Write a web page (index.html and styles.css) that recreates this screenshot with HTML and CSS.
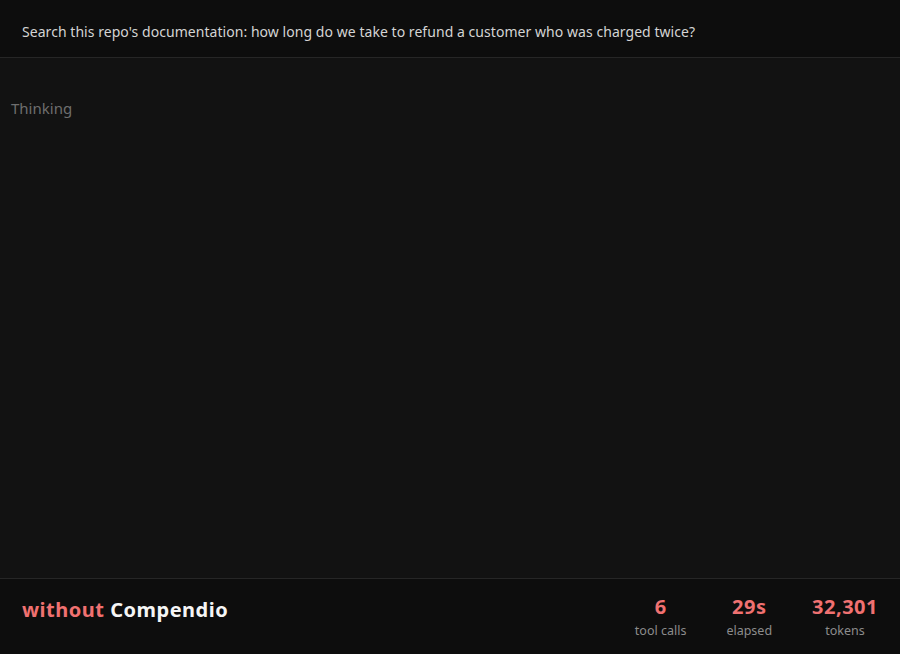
FILE: index.html
```html
<!DOCTYPE html>
<html lang="en">
<head>
  <meta charset="UTF-8">
  <title>without Compendio</title>
  <link rel="stylesheet" href="styles.css">
</head>
<body>

  <div class="prompt">Search this repo's documentation: how long do we take to refund a customer who was charged twice?</div>

  <div class="log">
    <div class="thinking">Thinking</div>
  </div>

  <div class="footer">
    <div class="title"><span class="without">without</span> Compendio</div>
    <div class="stats">
      <div class="stat">
        <div class="num">6</div>
        <div class="label">tool calls</div>
      </div>
      <div class="stat">
        <div class="num">29s</div>
        <div class="label">elapsed</div>
      </div>
      <div class="stat">
        <div class="num">32,301</div>
        <div class="label">tokens</div>
      </div>
    </div>
  </div>

</body>
</html>
```

FILE: styles.css
```css
html, body {
  height: 100%;
}
body {
  margin: 0;
  display: flex;
  flex-direction: column;
  background-color: #121212;
  font-family: 'Noto Sans', 'Open Sans', sans-serif;
}
.prompt {
  height: 58px;
  box-sizing: border-box;
  padding: 5px 22px 0;
  display: flex;
  align-items: center;
  background-color: #0d0d0d;
  border-bottom: 1px solid #262626;
  color: #d4d4d4;
  font-size: 14px;
  letter-spacing: 0.05px;
}
.log {
  flex: 1;
  padding: 40px 11px;
}
.thinking {
  color: #6e6e6e;
  font-size: 15px;
}
.footer {
  height: 76px;
  flex-shrink: 0;
  box-sizing: border-box;
  border-top: 1px solid #262626;
  background-color: #0d0d0d;
  display: flex;
  align-items: center;
  justify-content: space-between;
  padding: 0 22px 14px;
}
.title {
  font-size: 20px;
  font-weight: bold;
  letter-spacing: 0.5px;
  color: #f5f5f5;
}
.without {
  color: #f07171;
}
.stats {
  display: flex;
  gap: 40px;
  margin-top: 16px;
}
.stat {
  text-align: center;
}
.num {
  font-size: 20px;
  font-weight: bold;
  letter-spacing: 0.5px;
  line-height: 24px;
  color: #f07171;
}
.label {
  margin-top: 3px;
  font-size: 12.5px;
  line-height: 18px;
  color: #8c8c8c;
}
```
